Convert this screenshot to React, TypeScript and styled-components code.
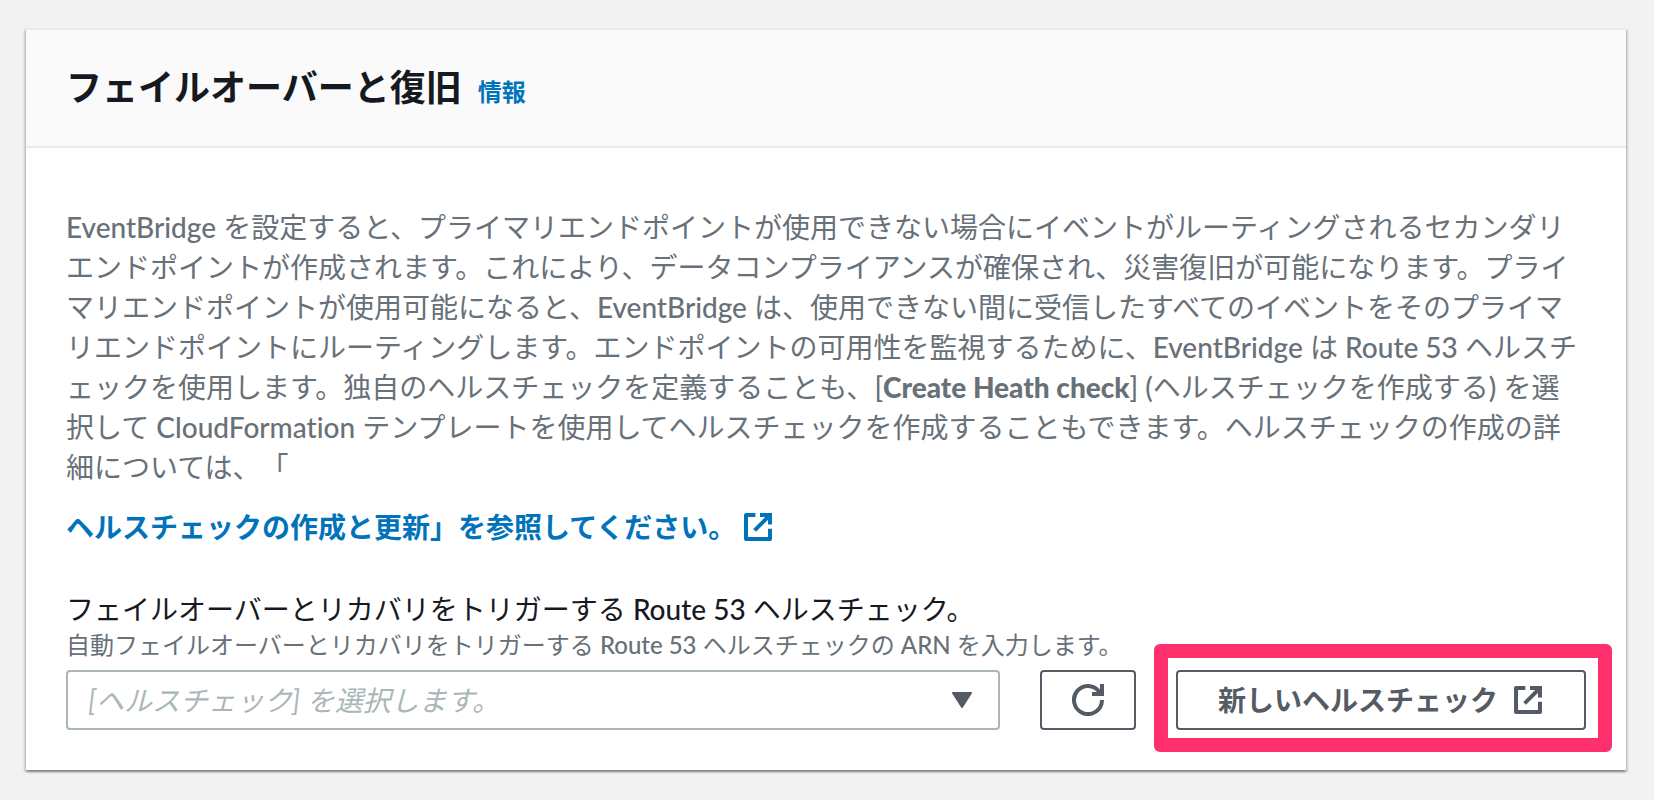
import React from "react";
import styled, { createGlobalStyle } from "styled-components";

const colors = {
  page: "#f2f2f2",
  card: "#ffffff",
  header: "#fafafa",
  divider: "#eaeaeb",
  heading: "#16191f",
  body: "#687078",
  link: "#0073bb",
  control: "#545b64",
  field: "#aab7b8",
  highlight: "#ff2e6c",
};

const GlobalStyle = createGlobalStyle`
  *, *::before, *::after { box-sizing: border-box; }
  body {
    margin: 0;
    background: ${colors.page};
    color: ${colors.heading};
    font-family: Lato, "Noto Sans CJK JP", sans-serif;
    font-size: 28px;
    line-height: 40px;
    font-variant-ligatures: none;
    text-spacing-trim: space-all;
  }
  button, select { font: inherit; }
`;

const Page = styled.main`
  padding: 28px 28px 24px 26px;
`;

const Card = styled.section`
  background: ${colors.card};
  border-top: 2px solid ${colors.divider};
  box-shadow:
    0 2px 2px 0 rgba(0, 28, 36, 0.3),
    2px 2px 2px 0 rgba(0, 28, 36, 0.15),
    -2px 2px 2px 0 rgba(0, 28, 36, 0.15);
`;

const CardHeader = styled.header`
  display: flex;
  align-items: baseline;
  gap: 16px;
  padding: 33px 40px 35px;
  background: ${colors.header};
  border-bottom: 2px solid ${colors.divider};
`;

const Title = styled.h2`
  margin: 0;
  font-size: 36px;
  line-height: 48px;
  font-weight: 700;
`;

const Link = styled.a<{ $small?: boolean }>`
  display: inline-flex;
  align-items: center;
  gap: 6px;
  color: ${colors.link};
  font-size: ${(p) => (p.$small ? 24 : 28)}px;
  line-height: ${(p) => (p.$small ? 32 : 40)}px;
  font-weight: 700;
  text-decoration: none;
`;

const CardBody = styled.div`
  display: flex;
  flex-direction: column;
  align-items: stretch;
  padding: 59px 40px 40px;
`;

const Description = styled.p`
  margin: 0 0 20px;
  color: ${colors.body};
`;

const Latin = styled.span`
  font-weight: 500;
`;

const Strong = styled.strong`
  font-weight: 900;
`;

const Field = styled.div`
  display: flex;
  flex-direction: column;
  margin-top: 42px;
`;

const Label = styled.label`
  color: ${colors.heading};
`;

const Hint = styled.span`
  margin-bottom: 9px;
  color: ${colors.body};
  font-size: 24px;
  line-height: 32px;
`;

const Controls = styled.div`
  display: flex;
  gap: 40px;
`;

const SelectWrap = styled.div`
  display: grid;
  flex: 1;
  align-items: center;
  min-width: 0;

  > * { grid-area: 1 / 1; }

  > svg {
    justify-self: end;
    margin-right: 28px;
    pointer-events: none;
  }
`;

const Select = styled.select`
  appearance: none;
  width: 100%;
  height: 60px;
  padding: 0 64px 0 20px;
  border: 2px solid ${colors.field};
  border-radius: 4px;
  background: ${colors.card};
  color: ${colors.field};
  font-style: italic;
`;

const Button = styled.button<{ $icon?: boolean }>`
  display: inline-flex;
  align-items: center;
  justify-content: center;
  gap: 14px;
  height: 60px;
  padding: 0 ${(p) => (p.$icon ? 30 : 40)}px;
  border: 2px solid ${colors.control};
  border-radius: 4px;
  background: ${colors.card};
  color: ${colors.control};
  font-weight: 700;
  white-space: nowrap;
  cursor: pointer;
`;

const Highlight = styled.div`
  position: relative;
  display: flex;

  &::after {
    content: "";
    position: absolute;
    inset: -26px -26px -22px -22px;
    border: 14px solid ${colors.highlight};
    border-radius: 6px;
    pointer-events: none;
  }
`;

const Icon = styled.svg`
  display: block;
  flex: none;
  width: 32px;
  height: 32px;
  fill: none;
  stroke: currentColor;
  stroke-width: 2;
`;

const ExternalIcon = () => (
  <Icon viewBox="0 0 16 16" aria-hidden="true">
    <path d="M6.700 2H2v12h12V8.900" strokeLinejoin="round" />
    <path d="M9 2h5v4.700M14 2 6.300 9.700" />
  </Icon>
);

const RefreshIcon = () => (
  <Icon viewBox="0 0 16 16" aria-hidden="true">
    <path d="M15 8A7 7 0 1 1 14.320 5" />
    <path d="M15 0v5h-5" />
  </Icon>
);

const CaretIcon = () => (
  <svg width="20" height="16" viewBox="0 0 20 16" aria-hidden="true">
    <path
      d="M1 1h18l-9 14z"
      fill={colors.control}
      stroke={colors.control}
      strokeWidth="2"
      strokeLinejoin="round"
    />
  </svg>
);

export default function App() {
  return (
    <>
      <GlobalStyle />
      <Page lang="ja">
        <Card>
          <CardHeader>
            <Title>フェイルオーバーと復旧</Title>
            <Link href="#info" $small>情報</Link>
          </CardHeader>
          <CardBody>
            <Description>
              <Latin>EventBridge</Latin> を設定すると、プライマリエンドポイントが使用できない場合にイベントがルーティングされるセカンダリエンドポイントが作成されます。これにより、データコンプライアンスが確保され、災害復旧が可能になります。プライマリエンドポイントが使用可能になると、<Latin>EventBridge</Latin> は、使用できない間に受信したすべてのイベントをそのプライマリエンドポイントにルーティングします。エンドポイントの可用性を監視するために、<Latin>EventBridge</Latin> は <Latin>Route 53</Latin> ヘルスチェックを使用します。独自のヘルスチェックを定義することも、<Latin>[</Latin><Strong>Create Heath check</Strong><Latin>] (</Latin>ヘルスチェックを作成する<Latin>)</Latin> を選択して <Latin>CloudFormation</Latin> テンプレートを使用してヘルスチェックを作成することもできます。ヘルスチェックの作成の詳細については、「
            </Description>
            <div>
              <Link href="#health-checks">
                ヘルスチェックの作成と更新」を参照してください。
                <ExternalIcon />
              </Link>
            </div>
            <Field>
              <Label htmlFor="health-check">
                フェイルオーバーとリカバリをトリガーする <Latin>Route 53</Latin> ヘルスチェック。
              </Label>
              <Hint id="health-check-hint">
                自動フェイルオーバーとリカバリをトリガーする <Latin>Route 53</Latin> ヘルスチェックの <Latin>ARN</Latin> を入力します。
              </Hint>
              <Controls>
                <SelectWrap>
                  <Select id="health-check" aria-describedby="health-check-hint" defaultValue="">
                    <option value="">[ヘルスチェック] を選択します。</option>
                  </Select>
                  <CaretIcon />
                </SelectWrap>
                <Button type="button" $icon aria-label="更新">
                  <RefreshIcon />
                </Button>
                <Highlight>
                  <Button type="button">
                    新しいヘルスチェック
                    <ExternalIcon />
                  </Button>
                </Highlight>
              </Controls>
            </Field>
          </CardBody>
        </Card>
      </Page>
    </>
  );
}
